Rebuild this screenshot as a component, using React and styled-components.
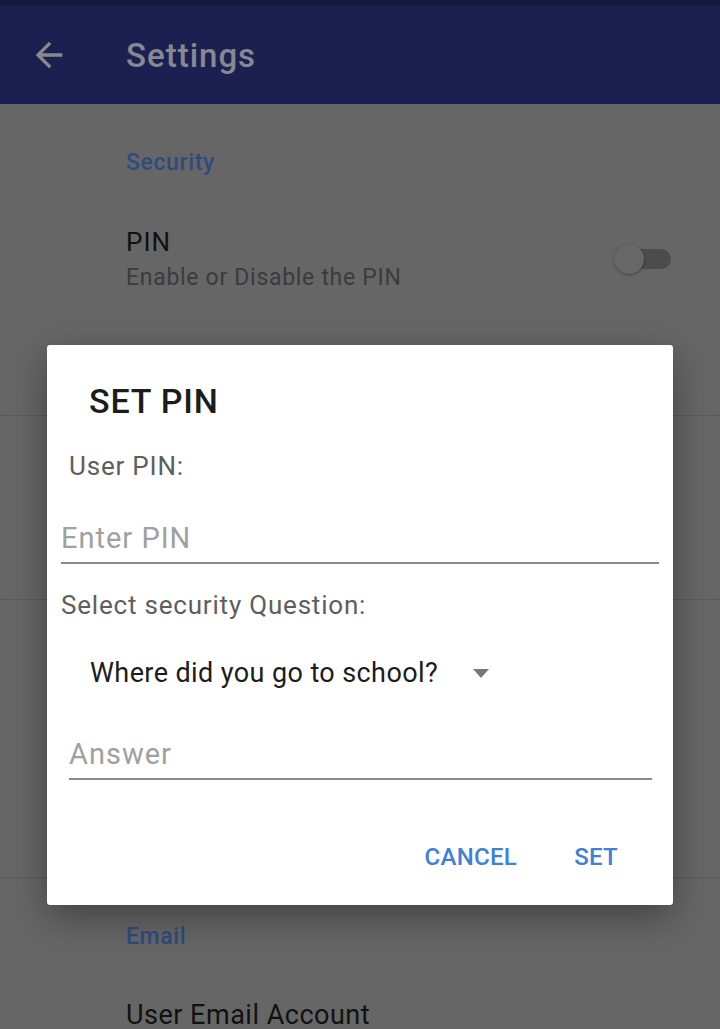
import React from "react";
import styled, { createGlobalStyle } from "styled-components";

const GlobalStyle = createGlobalStyle`
  html, body {
    margin: 0;
    padding: 0;
    background: #666666;
    font-family: Roboto, "Liberation Sans", sans-serif;
  }
`;

const App = () => {
  return (
    <>
      <GlobalStyle />
      <Screen>
        <StatusBar />
        <AppBar>
          <BackButton>
            <svg width="40" height="40" viewBox="0 0 24 24">
              <path
                d="M20 11H7.83l5.59-5.59L12 4l-8 8 8 8 1.41-1.41L7.83 13H20v-2z"
                fill="#8a8a8c"
              />
            </svg>
          </BackButton>
          <Title>Settings</Title>
        </AppBar>

        <Category>Security</Category>
        <PrefItem $height={238}>
          <PrefText>
            <PrefTitle>PIN</PrefTitle>
            <PrefSummary>Enable or Disable the PIN</PrefSummary>
          </PrefText>
          <Toggle>
            <Track />
            <Thumb />
          </Toggle>
        </PrefItem>
        <PrefItem $height={184} />
        <PrefItem $height={278} />

        <Category>Email</Category>
        <PrefItem $height={80} $plain>
          <PrefText>
            <PrefTitle $big>User Email Account</PrefTitle>
          </PrefText>
        </PrefItem>

        <Dialog>
          <DialogTitle>SET PIN</DialogTitle>
          <Label $left={22} $top={29}>User PIN:</Label>
          <Field $left={14} $width={598} $top={38}>
            <Hint>Enter PIN</Hint>
          </Field>
          <Label $left={14} $top={25}>Select security Question:</Label>
          <Spinner>
            <SpinnerText>Where did you go to school?</SpinnerText>
            <svg width="16" height="9" viewBox="0 0 16 9">
              <path d="M0 0h16L8 9z" fill="#777777" />
            </svg>
          </Spinner>
          <Field $left={22} $width={583} $top={45}>
            <Hint>Answer</Hint>
          </Field>
          <Actions>
            <ActionButton>CANCEL</ActionButton>
            <ActionButton>SET</ActionButton>
          </Actions>
        </Dialog>
      </Screen>
    </>
  );
};

const Screen = styled.div`
  position: relative;
  width: 720px;
  height: 1029px;
  overflow: hidden;
  display: flex;
  flex-direction: column;
  background: #666666;
  & > * {
    flex-shrink: 0;
  }
`;
const StatusBar = styled.div`
  height: 6px;
  background: #141a3e;
`;
const AppBar = styled.div`
  height: 98px;
  display: flex;
  align-items: center;
  background: #1b2050;
`;
const BackButton = styled.div`
  width: 40px;
  height: 40px;
  margin-left: 29px;
  display: flex;
`;
const Title = styled.div`
  margin-left: 57px;
  font-size: 33px;
  letter-spacing: 1px;
  font-weight: 500;
  color: #878893;
`;
const Category = styled.div`
  padding: 44px 0 0 126px;
  font-size: 23px;
  letter-spacing: 0.6px;
  line-height: 30px;
  font-weight: 500;
  color: #2e4b7e;
`;
const PrefItem = styled.div`
  box-sizing: border-box;
  height: ${(p) => p.$height}px;
  padding: ${(p) => (p.$plain ? "46px" : "48px")} 48px 0 126px;
  display: flex;
  align-items: flex-start;
  justify-content: space-between;
  border-bottom: ${(p) => (p.$plain ? "none" : "1px solid #5a5a5a")};
`;
const PrefText = styled.div`
  display: flex;
  flex-direction: column;
`;
const PrefTitle = styled.div`
  font-size: ${(p) => (p.$big ? "27px" : "26px")};
  letter-spacing: ${(p) => (p.$big ? "0.5px" : "1px")};
  line-height: ${(p) => (p.$big ? "34px" : "32px")};
  color: #111111;
`;
const PrefSummary = styled.div`
  margin-top: 5px;
  font-size: 23px;
  letter-spacing: 0.7px;
  line-height: 30px;
  color: #3b3b3b;
`;
const Toggle = styled.div`
  position: relative;
  width: 58px;
  height: 32px;
  margin-top: 17px;
`;
const Track = styled.div`
  position: absolute;
  left: 11px;
  top: 6px;
  width: 46px;
  height: 20px;
  border-radius: 10px;
  background: #4c4c4c;
`;
const Thumb = styled.div`
  position: absolute;
  left: 0;
  top: 1px;
  width: 30px;
  height: 30px;
  border-radius: 50%;
  background: #676767;
  box-shadow: 0 1px 3px rgba(0, 0, 0, 0.35);
`;
const Dialog = styled.div`
  position: absolute;
  top: 345px;
  left: 47px;
  width: 626px;
  height: 560px;
  box-sizing: border-box;
  padding-top: 36px;
  display: flex;
  flex-direction: column;
  background: #ffffff;
  border-radius: 3px;
  box-shadow: 0 12px 36px rgba(0, 0, 0, 0.35);
`;
const DialogTitle = styled.div`
  padding-left: 42px;
  font-size: 34px;
  letter-spacing: 0.8px;
  line-height: 40px;
  font-weight: 500;
  color: #1c1c1c;
`;
const Label = styled.div`
  margin: ${(p) => p.$top}px 0 0 ${(p) => p.$left}px;
  font-size: 26px;
  letter-spacing: 0.8px;
  line-height: 32px;
  color: #5e5e5e;
`;
const Field = styled.div`
  margin: ${(p) => p.$top}px 0 0 ${(p) => p.$left}px;
  width: ${(p) => p.$width}px;
  padding-bottom: 6px;
  border-bottom: 2px solid #8a8a8a;
`;
const Hint = styled.div`
  font-size: 29px;
  letter-spacing: 1px;
  line-height: 36px;
  color: #a0a0a0;
`;
const Spinner = styled.div`
  margin: 34px 0 0 43px;
  display: flex;
  align-items: center;
  gap: 35px;
`;
const SpinnerText = styled.div`
  font-size: 27px;
  letter-spacing: 0.4px;
  line-height: 36px;
  color: #1c1c1c;
`;
const Actions = styled.div`
  margin-top: 61px;
  padding-right: 55px;
  display: flex;
  justify-content: flex-end;
  gap: 57px;
`;
const ActionButton = styled.div`
  font-size: 24px;
  letter-spacing: 0.3px;
  line-height: 32px;
  font-weight: 500;
  color: #3f80d9;
`;

export default App;
